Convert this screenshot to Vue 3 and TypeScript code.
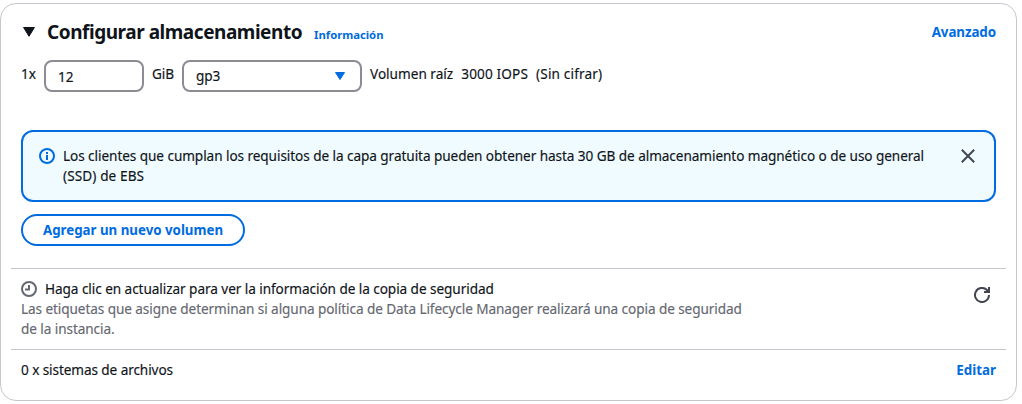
<script setup lang="ts">
import { ref } from 'vue'

const size = ref('12')
const volumeFacts: string[] = ['Volumen raíz', '3000 IOPS', '(Sin cifrar)']
const alertLines: string[] = [
  'Los clientes que cumplan los requisitos de la capa gratuita pueden obtener hasta 30 GB de almacenamiento magnético o de uso general',
  '(SSD) de EBS',
]
const backupLines: string[] = [
  'Las etiquetas que asigne determinan si alguna política de Data Lifecycle Manager realizará una copia de seguridad',
  'de la instancia.',
]
</script>

<template>
  <section class="card">
    <header class="head">
      <svg class="caret" viewBox="0 0 12 10"><path d="M0.6 0.5h10.8L6 9.3z" fill="currentColor" stroke="currentColor" stroke-linejoin="round" /></svg>
      <h2>Configurar almacenamiento</h2>
      <a class="info">Información</a>
      <a class="link push advanced">Avanzado</a>
    </header>

    <div class="volume">
      <span class="count">1x</span>
      <input v-model="size" class="box size" aria-label="GiB" />
      <span class="unit">GiB</span>
      <div class="box select">
        <span>gp3</span>
        <svg viewBox="0 0 10 8"><path d="M0.5 0.5h9L5 7.5z" fill="#006ce0" stroke="#006ce0" stroke-linejoin="round" /></svg>
      </div>
      <div class="facts"><span v-for="fact in volumeFacts" :key="fact">{{ fact }}</span></div>
    </div>

    <div class="alert">
      <svg class="icon" viewBox="0 0 16 16" fill="none" stroke="#006ce0">
        <circle cx="8" cy="8" r="7" stroke-width="2" />
        <path d="M8 7v5" stroke-width="2" /><path d="M7 4h2v2H7z" fill="#006ce0" stroke="none" />
      </svg>
      <p><span v-for="line in alertLines" :key="line" class="line">{{ line }}</span></p>
      <svg class="close" viewBox="0 0 16 16" fill="none" stroke="#424650" stroke-width="2"><path d="M1.8 1.8l12.4 12.4M14.2 1.8L1.8 14.2" /></svg>
    </div>

    <button class="add" type="button">Agregar un nuevo volumen</button>

    <div class="backup">
      <div>
        <div class="title">
          <svg class="icon" viewBox="0 0 16 16" fill="none" stroke="#656871"><circle cx="8" cy="8" r="7" stroke-width="2" /><path d="M8 4v4.5H4" stroke-width="2" /></svg>
          <span>Haga clic en actualizar para ver la información de la copia de seguridad</span>
        </div>
        <p class="muted"><span v-for="line in backupLines" :key="line" class="line">{{ line }}</span></p>
      </div>
      <svg class="refresh" viewBox="0 0 16 16" fill="none" stroke="#424650" stroke-width="2"><path d="M15 8a7 7 0 1 1-2.3-5.2L15 5" /><path d="M15 0v5h-5" /><path d="M12.4 2.4L15 5h-3z" fill="#424650" stroke="none" /></svg>
    </div>

    <footer class="files">
      <span>0 x sistemas de archivos</span>
      <a class="link push edit">Editar</a>
    </footer>
  </section>
</template>

<style>
body {
  background: #fff;
}
</style>

<style scoped>
.card {
  box-sizing: border-box;
  width: 1017px;
  height: 398px;
  margin-top: 3px;
  border: 1px solid #c6c6cd;
  border-radius: 16px;
  padding: 0 10px;
  color: #0f141a;
  font: 13.6px/20px "Noto Sans", sans-serif;
  letter-spacing: -0.09px;
  white-space: nowrap;
  -webkit-text-stroke: 0.15px;
}
.head {
  display: flex;
  align-items: center;
  height: 56px;
  padding: 0 10px;
  -webkit-text-stroke: 0;
}
.caret {
  width: 12px;
  height: 10px;
  margin: 0 12px 0 2px;
}
h2 {
  margin: 0;
  font-size: 19px;
  line-height: 24px;
  letter-spacing: -0.46px;
}
.info {
  margin: 5px 0 0 12px;
  font-size: 11.3px;
  font-weight: 700;
  letter-spacing: -0.02px;
  color: #006ce0;
}
.link {
  font-size: 13.4px;
  font-weight: 700;
  letter-spacing: -0.1px;
  color: #006ce0;
  -webkit-text-stroke: 0;
}
.edit {
  letter-spacing: 0;
}
.push {
  margin-left: auto;
}
.volume {
  display: flex;
  height: 32px;
  padding-left: 10px;
}
.count {
  width: 22px;
  margin: 4px 1px 0 0;
}
.box {
  box-sizing: border-box;
  height: 32px;
  border: 2px solid #8c8c94;
  border-radius: 8px;
  color: inherit;
  font: inherit;
  letter-spacing: inherit;
  background: #fff;
}
.size {
  width: 100px;
  padding: 0 12px;
}
.unit {
  width: 22px;
  margin: 4px 8px 0;
}
.select {
  display: flex;
  align-items: center;
  justify-content: space-between;
  width: 180px;
  padding: 0 15px 0 12px;
}
.select svg {
  width: 10px;
  height: 8px;
}
.facts {
  display: flex;
  gap: 8px;
  margin: 4px 0 0 8px;
  letter-spacing: 0.15px;
}
.facts span:first-child {
  letter-spacing: 0;
}
.alert {
  box-sizing: border-box;
  display: flex;
  height: 72px;
  margin: 38px 10px 0;
  padding: 14px 18px 0 16px;
  border: 2px solid #006ce0;
  border-radius: 12px;
  background: #f0fbff;
  letter-spacing: -0.068px;
}
p {
  margin: 0;
}
.line {
  display: block;
}
.alert .line + .line {
  letter-spacing: 0.1px;
}
.icon {
  flex: none;
  width: 16px;
  height: 16px;
  margin-top: 2px;
}
.alert p {
  margin-left: 8px;
}
.close {
  width: 16px;
  height: 16px;
  margin: 2px 0 0 auto;
}
.add {
  display: block;
  box-sizing: border-box;
  width: 224px;
  height: 32px;
  margin: 12px 10px 22px;
  padding: 0;
  border: 2px solid #006ce0;
  border-radius: 16px;
  background: #fff;
  color: #006ce0;
  font: inherit;
  font-size: 13.3px;
  font-weight: 700;
  letter-spacing: 0;
  -webkit-text-stroke: 0;
}
.backup {
  box-sizing: border-box;
  display: flex;
  justify-content: space-between;
  height: 81px;
  padding: 10px 16px 0 10px;
  border-top: 1px solid #c6c6cd;
}
.title {
  display: flex;
  gap: 8px;
  letter-spacing: -0.065px;
}
.muted {
  color: #656871;
  letter-spacing: -0.085px;
}
.refresh {
  width: 16px;
  height: 16px;
  margin-top: 8px;
}
.files {
  display: flex;
  padding: 10px;
  border-top: 1px solid #c6c6cd;
}
</style>
